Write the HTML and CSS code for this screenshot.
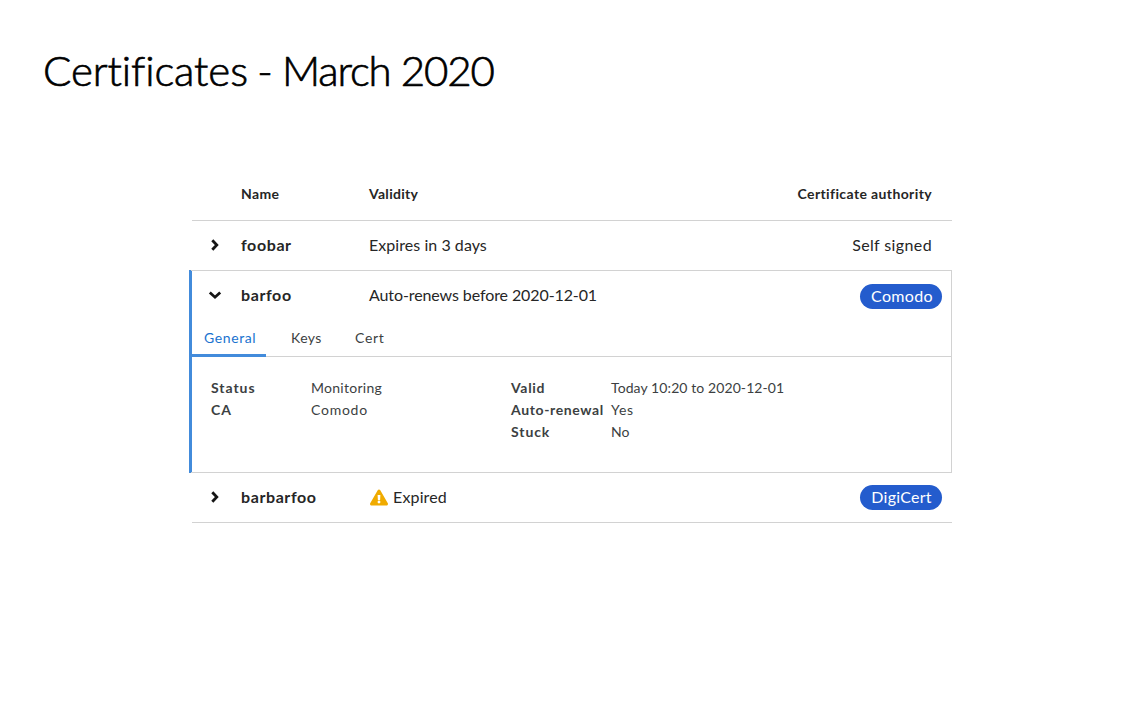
FILE: index.html
```html
<!DOCTYPE html>
<html lang="en">
<head>
<meta charset="utf-8">
<title>Certificates</title>
<link rel="stylesheet" href="styles.css">
</head>
<body>
<h1 class="page-title">Certificates <span class="t-dash">-</span> <span class="t-date">March 2020</span></h1>
<main class="cert-table">
  <div class="row row-head">
    <span></span><span class="t-name">Name</span><span class="t-validity">Validity</span><span class="authority t-authority">Certificate authority</span>
  </div>
  <div class="row row-first">
    <svg class="chevron" viewBox="0 0 14 14"><path d="M4.3 2.2 8.8 7 4.3 11.8"/></svg>
    <strong class="t-foobar">foobar</strong><span class="t-expires">Expires in 3 days</span><span class="authority t-self">Self signed</span>
  </div>
  <section class="expanded">
    <div class="row row-open">
      <svg class="chevron" viewBox="0 0 14 14"><path d="M1.8 4.5 7 9.2 12.2 4.5"/></svg>
      <strong class="t-foobar">barfoo</strong><span class="t-renews">Auto-renews before 2020-12-01</span><span class="badge"><span class="t-comodo-badge">Comodo</span></span>
    </div>
    <nav class="tabs">
      <span class="tab active"><span class="t-general">General</span></span>
      <span class="tab tab-keys"><span class="t-keys">Keys</span></span>
      <span class="tab tab-cert"><span class="t-cert">Cert</span></span>
    </nav>
    <div class="details">
      <dl class="facts">
        <dt><span class="t-status">Status</span></dt><dd><span class="t-monitoring">Monitoring</span></dd>
        <dt><span class="t-ca">CA</span></dt><dd><span class="t-comodo">Comodo</span></dd>
      </dl>
      <dl class="facts">
        <dt><span class="t-valid">Valid</span></dt><dd><span class="t-today">Today 10:20 to 2020-12-01</span></dd>
        <dt><span class="t-auto">Auto-renewal</span></dt><dd><span class="t-yes">Yes</span></dd>
        <dt><span class="t-stuck">Stuck</span></dt><dd><span>No</span></dd>
      </dl>
    </div>
  </section>
  <div class="row row-last">
    <svg class="chevron" viewBox="0 0 14 14"><path d="M4.3 2.2 8.8 7 4.3 11.8"/></svg>
    <strong class="t-barbarfoo">barbarfoo</strong>
    <span class="warning"><svg class="warning-icon" viewBox="0 0 576 512"><path d="M569.517 440.013C587.975 472.007 564.806 512 527.94 512H48.054c-36.937 0-59.999-40.055-41.577-71.987L246.423 23.985c18.467-32.009 64.72-31.951 83.154 0l239.94 416.028zM288 354c-25.405 0-46 20.595-46 46s20.595 46 46 46 46-20.595 46-46-20.595-46-46-46zm-43.673-165.346l7.418 136c.347 6.364 5.609 11.346 11.982 11.346h48.546c6.373 0 11.635-4.982 11.982-11.346l7.418-136c.375-6.874-5.098-12.654-11.982-12.654h-63.383c-6.884 0-12.356 5.78-11.981 12.654z"/></svg><span class="t-expired">Expired</span></span>
    <span class="badge"><span class="t-digicert">DigiCert</span></span>
  </div>
</main>
</body>
</html>
```
FILE: styles.css
```css
* { box-sizing: border-box; }
body { margin: 0; background: #fff; color: #262626; font-family: Lato, "Open Sans", sans-serif; font-size: 16px; line-height: 24px; white-space: nowrap; font-variant-ligatures: none; }
.page-title { margin: 0; padding: 43px 0 0 43px; height: 170px; color: #000; font-size: 42px; line-height: 54px; font-weight: 300; letter-spacing: -.1px; -webkit-text-stroke: .7px #000; }
.cert-table { width: 760px; margin-left: 192px; }
.row { display: grid; grid-template-columns: 49px 128px 1fr auto; align-items: center; height: 50px; padding-bottom: 1px; border-bottom: 1px solid #d2d2d2; }
.row-head { height: 51px; padding-bottom: 2px; font-size: 14px; font-weight: 700; }
.row-first { height: 49px; border-bottom: 0; }
.row strong { font-weight: 700; }
.authority { padding-right: 20px; }
.chevron { width: 14px; height: 14px; margin: 0 0 1px 16px; fill: none; stroke: #151515; stroke-width: 2.8; }
.expanded { height: 203px; margin-left: -3px; padding-left: 3px; border: 1px solid; border-left: 0; border-image: linear-gradient(to right, #428bdb 3px, #d2d2d2 3px) 1; background: linear-gradient(#428bdb, #428bdb) 0 0 / 3px 100% no-repeat; }
.row-open { padding-bottom: 2px; border: 0; }
.badge { display: flex; align-items: center; justify-content: center; width: 82px; height: 25px; margin: 3px 9px 0 0; border-radius: 13px; background: #245ccd; color: #fff; }
.row-open .badge { padding-bottom: 1px; }
.row-last .badge { margin: 0 10px 0 0; }
.tabs { display: flex; height: 36px; border-bottom: 1px solid #d2d2d2; font-size: 14px; color: #3c3f42; }
.tab { display: flex; height: 36px; padding: 5px 0 0 25px; }
.tab-keys { width: 89px; }
.tab-cert { padding-left: 0; }
.active { width: 74px; padding-left: 12px; border-bottom: 3px solid #428bdb; color: #1a73cf; }
.details { display: grid; grid-template-columns: 300px 1fr; padding: 20px 0 0 19px; font-size: 14px; color: #3c3f42; }
.facts { display: grid; grid-template-columns: 100px 1fr; grid-auto-rows: 22px; line-height: 22px; margin: 0; }
.facts dt { font-weight: 700; }
.facts dd { margin: 0; }
.warning { display: flex; align-items: center; gap: 5px; }
.warning-icon { width: 18px; height: 17px; margin-left: 1px; fill: #f0ab00; }

/* Tracking per label */
.t-dash { margin: 0 -2px; }
.t-date { letter-spacing: -1.15px; }
.t-name { letter-spacing: .35px; }
.t-validity { letter-spacing: .3px; }
.t-authority { letter-spacing: .38px; }
.t-foobar { letter-spacing: .6px; }
.t-expires { letter-spacing: .05px; }
.t-self { letter-spacing: .38px; }
.t-renews { letter-spacing: -.1px; }
.t-comodo-badge { margin-left: 2px; letter-spacing: .35px; }
.t-general { letter-spacing: .6px; }
.t-keys { letter-spacing: .4px; }
.t-cert { letter-spacing: .7px; }
.t-status { letter-spacing: .95px; }
.t-monitoring { letter-spacing: .28px; }
.t-ca { letter-spacing: 1px; }
.t-comodo { letter-spacing: .75px; }
.t-valid { letter-spacing: .7px; }
.t-today { letter-spacing: .09px; }
.t-auto { letter-spacing: .63px; }
.t-yes { letter-spacing: .7px; }
.t-stuck { letter-spacing: .9px; }
.t-barbarfoo { letter-spacing: .6px; }
.t-expired { letter-spacing: .15px; }
.t-digicert { margin-left: 1px; letter-spacing: .25px; }
```
